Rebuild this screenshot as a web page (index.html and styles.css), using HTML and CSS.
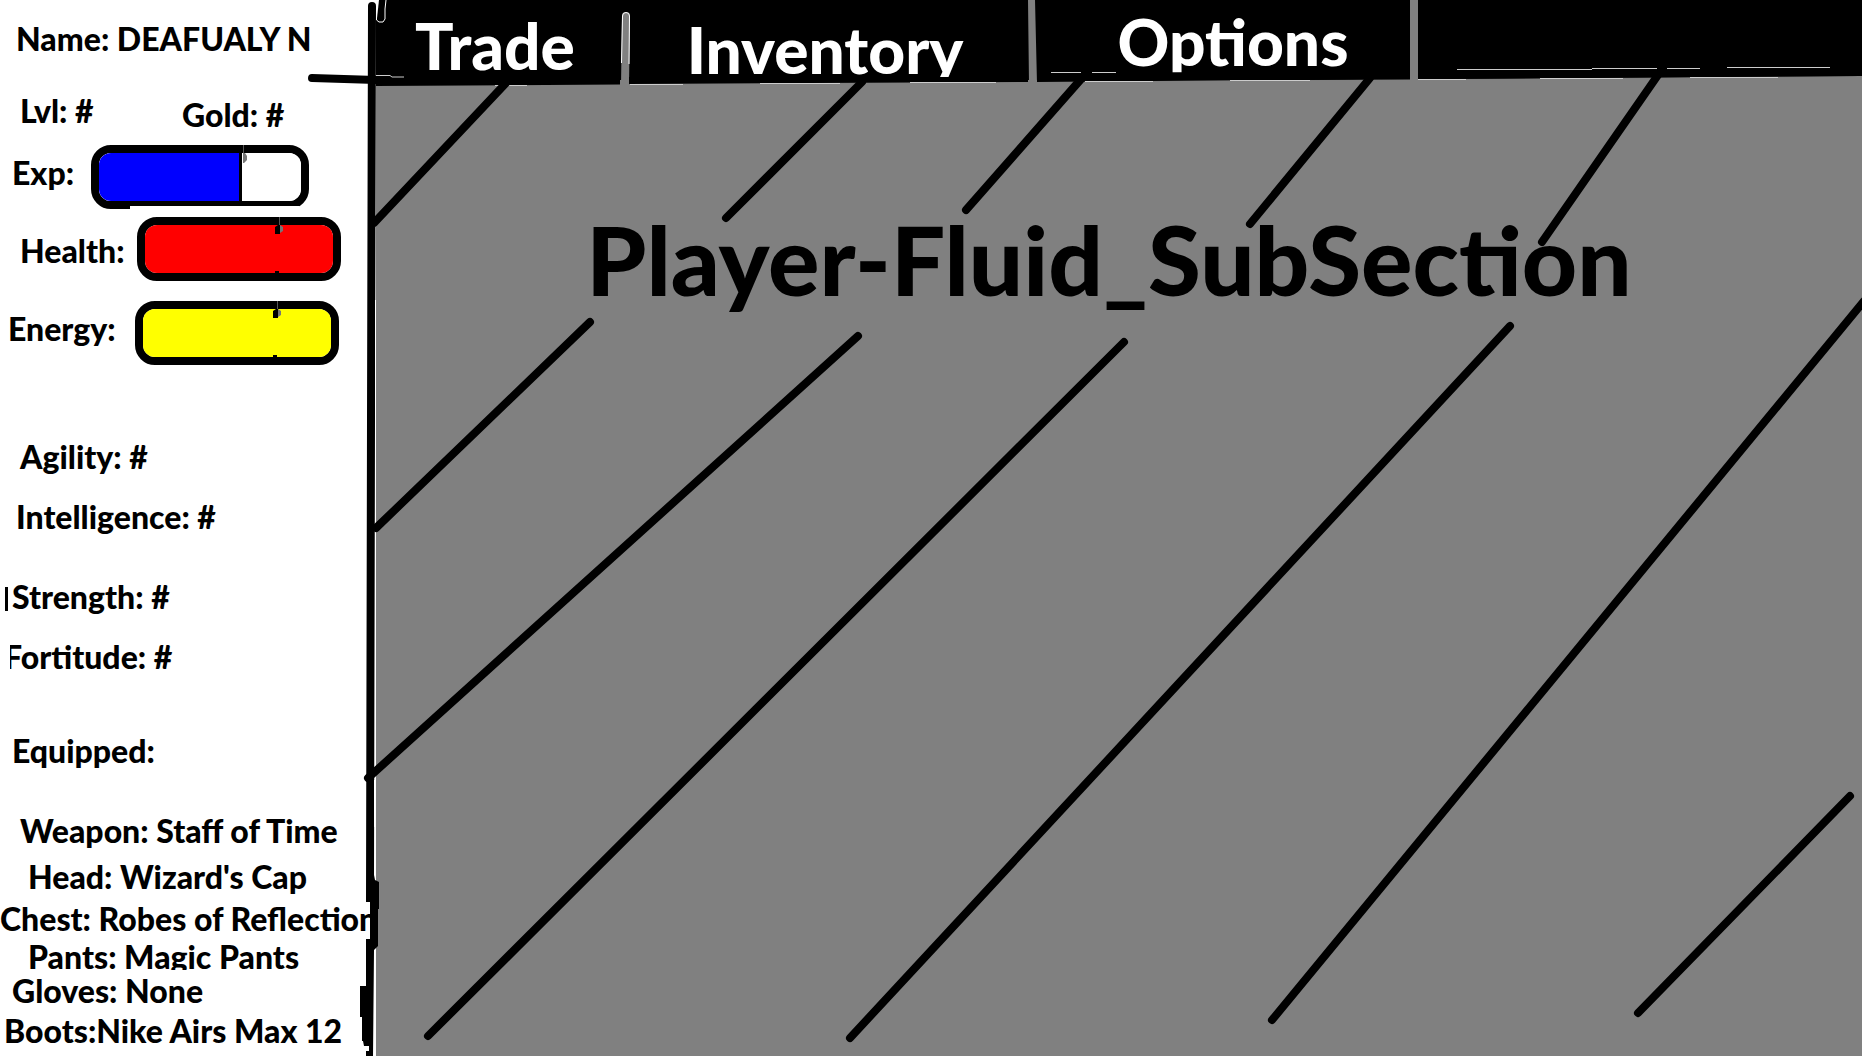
FILE: index.html
```html
<!DOCTYPE html>
<html lang="en">
<head>
<meta charset="utf-8">
<title>Player</title>
<link rel="stylesheet" href="styles.css">
</head>
<body>
<div class="screen">
  <aside class="stats">
    <p class="row name in-16">Name: DEAFUALY N</p>
    <div class="row pair in-20"><span class="level">Lvl: #</span><span class="gold">Gold: #</span></div>
    <div class="meters">
      <div class="meter short in-12"><label for="exp">Exp:</label><progress id="exp" class="exp" value="71" max="100"></progress></div>
      <div class="meter in-20"><label class="low" for="health">Health:</label><progress id="health" class="health" value="100" max="100"></progress></div>
      <div class="meter last in-8"><label for="energy">Energy:</label><progress id="energy" class="energy" value="100" max="100"></progress></div>
    </div>
    <ul class="list traits">
      <li class="row in-20">Agility: #</li>
      <li class="row in-16">Intelligence: #</li>
    </ul>
    <ul class="list traits body">
      <li class="row in-12">Strength: #</li>
      <li class="row in-4">Fortitude: #</li>
    </ul>
    <h2 class="row equipped in-12">Equipped:</h2>
    <ul class="list gear">
      <li class="row in-20">Weapon: Staff of Time</li>
      <li class="row in-28">Head: Wizard's Cap</li>
      <li class="row chest">Chest: Robes of Reflection</li>
      <li class="row pants in-28">Pants: Magic Pants</li>
      <li class="row in-12">Gloves: None</li>
      <li class="row boots in-4">Boots:Nike Airs Max 12</li>
    </ul>
  </aside>
  <div class="content">
    <nav class="tabs">
      <button class="tab trade" type="button">Trade</button>
      <button class="tab inventory" type="button">Inventory</button>
      <button class="tab options" type="button">Options</button>
    </nav>
    <main class="section"><h1 class="title">Player-Fluid_SubSection</h1></main>
  </div>
  <svg class="ink" viewBox="0 0 1862 1056" preserveAspectRatio="none" aria-hidden="true">
    <!-- tab dividers -->
    <path d="M621 86L622 16Q622 12 626 12Q630 12 630 16L629 86ZM1028 0H1035L1037 84H1029ZM1410 0H1418V82H1410ZM1300 80L1862 76V81H1300Z" fill="#808080"/>
    <path d="M621.500 63L622.500 16Q622.500 12.500 626 12.500Q629.500 12.500 629.500 16L629 64" fill="none" stroke="#fff"/>
    <!-- rule under the tabs -->
    <path d="M376 76.500L620 76L620 84.500L376 86ZM629 77H980L1028 73.500V82L629 84ZM1037 73L1410 71V79L1037 82ZM1418 71L1862 67.500V76L1418 79Z"/>
    <path d="M376 75.500H390L392 77H404M1051 72.500H1081M1092 72.500H1116M1457 69.500H1592M1592 68.500H1657M1667 68.500H1700M1727 67.500H1830M495 85.500H527M630 84.500H683M760 83.500H840M910 82.500H996M1085 81.500H1153M1230 80.500H1310M1418 79.500H1466M1540 78.500H1623M1690 77.500H1778" fill="none" stroke="#ccc"/>
    <!-- hatching -->
    <path d="M374 223L506 83M726 218L862 82M966 210L1082 78M1250 224L1370 78M1542 242L1658 75M590 322L376 528M858 336L368 778M1124 342L428 1036M1510 326L850 1038M1864 301L1272 1020M1850 796L1638 1013" fill="none" stroke="#000" stroke-width="8" stroke-linecap="round"/>
    <!-- sidebar edge -->
    <path d="M374 0H379L377 18H374Z" fill="#fff"/>
    <path d="M368 6Q368 2 372 2Q376 2 376 6L375 420L374 875L375 880L379 882V909H378V946L374 950L373 1056H366V1051H369V1046H364L363 1041H362V1017H360V986H366V939H370V902H366L367 420Z"/>
    <path d="M312 78L376 80" fill="none" stroke="#000" stroke-width="8" stroke-linecap="round"/>
    <path d="M376.500 18V20L379 22H383L385 19V9L386 0M375.500 300V416M374.500 780V827" fill="none" stroke="#fff"/>
    <!-- stray marks -->
    <path d="M243.500 145V161M279.500 217V232M277.500 301V316" stroke="#555" stroke-width="1"/>
    <path d="M275 227L278 225H280V234H275ZM275 271H279V274H275ZM273 311L276 309H278V318H273ZM273 355H277V358H273ZM5 587H8V611H5Z"/>
    <path d="M243 153H245L247 156V160L244 163H243ZM280 225L283 227V231L280 233ZM278 309L281 311V315L278 317Z" fill="#777"/>
    <path d="M130 206H300L297 210H130ZM0 643H10V671H0Z" fill="#fff"/>
  </svg>
</div>
</body>
</html>
```
FILE: styles.css
```css
* { box-sizing: border-box; }

body {
  margin: 0;
  background: #fff;
  color: #000;
  font-family: Lato, "Open Sans", sans-serif;
  font-size: 32px;
  font-weight: 900;
  line-height: 34px;
}

.screen {
  position: relative;
  display: grid;
  grid-template-columns: 376px 1fr;
  min-height: 100vh;
}

.ink {
  position: absolute;
  inset: 0;
  width: 100%;
  height: 100%;
  pointer-events: none;
}

/* Sidebar */
.stats { padding: 22px 6px 0 0; overflow: hidden; }
.row { margin: 0; font-size: 32px; font-weight: 900; white-space: nowrap; }
.in-4 { padding-left: 4px; }
.in-8 { padding-left: 8px; }
.in-12 { padding-left: 12px; }
.in-16 { padding-left: 16px; }
.in-20 { padding-left: 20px; }
.in-28 { padding-left: 28px; }

.pair { display: flex; margin-top: 38px; }
.level { width: 162px; }
.gold { padding-top: 4px; }

.meters { display: flex; flex-direction: column; gap: 8px; margin-top: 13px; }
.meter { display: grid; grid-template-columns: 117px 204px; height: 64px; }
.meter.short { grid-template-columns: 79px 218px; }
.meter.last { grid-template-columns: 127px 204px; margin-top: 12px; }
.meter label { padding-top: 11px; }
.meter label.low { padding-top: 17px; }

progress {
  appearance: none;
  width: 100%;
  height: 64px;
  border: 8px solid #000;
  border-radius: 20px;
  background: #fff;
  overflow: hidden;
}
progress::-webkit-progress-bar { background: #fff; }
.exp::-webkit-progress-value { background: #00f; border-right: 3px solid #000; }
.health::-webkit-progress-value { background: #f00; }
.energy::-webkit-progress-value { background: #ff0; }

.list { margin: 0; padding: 0; list-style: none; display: flex; flex-direction: column; }
.traits { gap: 26px; margin-top: 75px; }
.traits.body { margin-top: 46px; }
.equipped { margin-top: 60px; }
.gear { margin-top: 46px; }
.gear .row + .row { margin-top: 12px; }
.gear .row.chest { margin-top: 8px; overflow: hidden; }
.gear .row.pants { margin-top: 4px; height: 30px; overflow: hidden; }
.gear .row.pants + .row { margin-top: 4px; }
.gear .row.boots { margin-top: 6px; }

/* Main area */
.content { display: flex; flex-direction: column; background: #808080; }
.tabs { display: flex; align-items: flex-start; height: 80px; background: #000; overflow: hidden; }
.tab {
  padding: 2px 0 0;
  border: 0;
  background: none;
  color: #fff;
  font: inherit;
  font-size: 64px;
  line-height: 80px;
}
.trade { width: 246px; padding: 6px 8px 0 0; }
.inventory { width: 398px; margin-left: 8px; padding: 10px 8px 0 0; }
.options { width: 374px; margin-left: 8px; padding-left: 20px; }
.section { flex: 1; padding: 119px 20px 0 0; }
.title { margin: 0; font-size: 96px; font-weight: 900; line-height: 120px; text-align: center; }
```
